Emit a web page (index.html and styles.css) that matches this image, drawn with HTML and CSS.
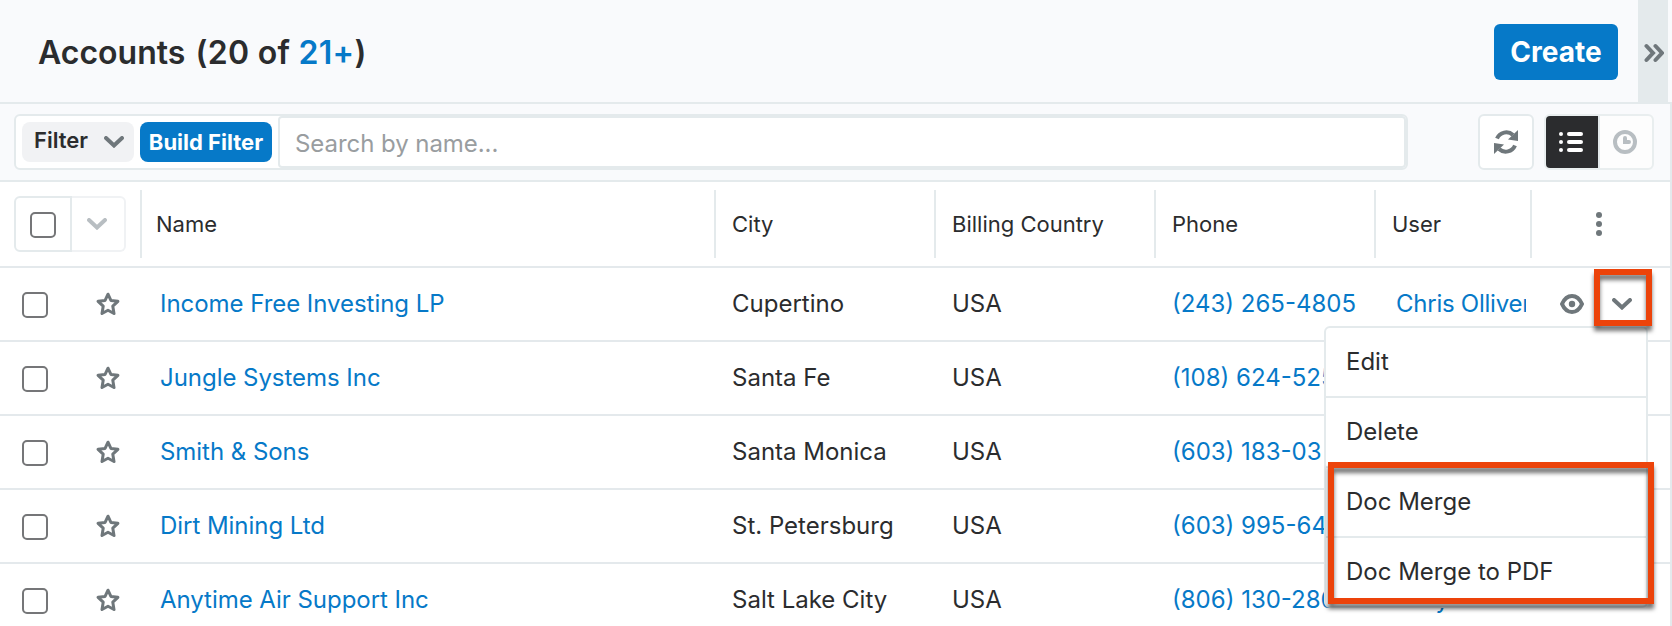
FILE: index.html
```
<!DOCTYPE html>
<html lang="en">
<head>
<meta charset="utf-8">
<title>Accounts</title>
<link rel="stylesheet" href="styles.css">
</head>
<body>
<svg class="defs" width="0" height="0" aria-hidden="true">
  <symbol id="star" viewBox="0 0 24 24"><path d="M12 2.200l2.900 6.200 7 .9-5.100 4.900 1.200 7.300L12 18.300l-6 3.200 1.200-7.300L2.100 9.300l7-.9z" fill="none" stroke="currentColor" stroke-width="3" stroke-linejoin="round"/></symbol>
  <symbol id="chev" viewBox="0 0 20 12"><path d="M2 2l8 7.500L18 2" fill="none" stroke="currentColor" stroke-width="4" stroke-linecap="round" stroke-linejoin="miter"/></symbol>
</svg>
<div class="app">
  <header class="top">
    <h1 class="title">Accounts <span class="count">(20 of <a class="link">21+</a>)</span></h1>
    <button class="create">Create</button>
    <div class="expand"><svg width="20" height="20" viewBox="0 0 20 20"><path d="M2.500 3l6.500 7-6.500 7M11.500 3l6.500 7-6.500 7" fill="none" stroke="#6f777b" stroke-width="4" stroke-linecap="round"/></svg></div>
  </header>
  <div class="toolbar">
    <div class="searchbox">
      <button class="filter">Filter <svg width="20" height="12"><use href="#chev"/></svg></button>
      <button class="build">Build Filter</button>
      <div class="search">Search by name...</div>
    </div>
    <button class="refresh"><svg width="24" height="24" viewBox="0 0 24 24"><path d="M3 8.500A10 10 0 0 1 19 5" fill="none" stroke="#6f777b" stroke-width="4"/><path d="M24 0v11l-10-1.500z" fill="#6f777b"/><path d="M21 15.500A10 10 0 0 1 5 19" fill="none" stroke="#6f777b" stroke-width="4"/><path d="M0 24V13l10 1.500z" fill="#6f777b"/></svg></button>
    <div class="toggle">
      <div class="mode on"><svg width="24" height="20" viewBox="0 0 24 20" fill="#fff"><circle cx="2" cy="2" r="2"/><circle cx="2" cy="10" r="2"/><circle cx="2" cy="18" r="2"/><rect x="8" width="16" height="4" rx="2"/><rect x="8" y="8" width="16" height="4" rx="2"/><rect x="8" y="16" width="16" height="4" rx="2"/></svg></div>
      <div class="mode"><svg width="24" height="24" viewBox="0 0 24 24"><circle cx="12" cy="12" r="10" fill="none" stroke="#b8bec2" stroke-width="4"/><path d="M10 8a2 2 0 0 1 4 0v2h2a2 2 0 0 1 0 4h-6z" fill="#b8bec2"/></svg></div>
    </div>
  </div>
  <div class="row head">
    <div class="select"><div class="pick"><i class="check"></i></div><div class="drop"><svg width="20" height="12"><use href="#chev"/></svg></div></div>
    <div class="cell name">Name</div><div class="cell">City</div><div class="cell">Billing Country</div><div class="cell">Phone</div><div class="cell">User</div>
    <div class="cell kebab"><svg width="6" height="24" viewBox="0 0 6 24" fill="#6f777b"><circle cx="3" cy="3" r="3"/><circle cx="3" cy="12" r="3"/><circle cx="3" cy="21" r="3"/></svg></div>
  </div>
  <div class="row">
    <div class="marks"><i class="check"></i><svg width="24" height="24"><use href="#star"/></svg></div>
    <div class="cell link">Income Free Investing LP</div><div class="cell">Cupertino</div><div class="cell">USA</div><div class="cell link phone">(243) 265-4805</div><div class="cell link user"><span>Chris Olliver</span></div>
    <div class="actions"><svg width="24" height="20" viewBox="0 0 24 20"><path d="M2 10c2.200-5 5.800-8 10-8s7.800 3 10 8c-2.200 5-5.800 8-10 8S4.200 15 2 10z" fill="none" stroke="currentColor" stroke-width="4" stroke-linejoin="round"/><circle cx="12" cy="10" r="3.200" fill="currentColor"/></svg>
      <div class="trigger"><svg width="20" height="12"><use href="#chev"/></svg><div class="mark mark-trigger"></div>
        <div class="menu"><div class="item">Edit</div><div class="item">Delete</div><div class="item">Doc Merge</div><div class="item">Doc Merge to PDF</div><div class="mark mark-items"></div></div>
      </div>
    </div>
  </div>
  <div class="row">
    <div class="marks"><i class="check"></i><svg width="24" height="24"><use href="#star"/></svg></div>
    <div class="cell link">Jungle Systems Inc</div><div class="cell">Santa Fe</div><div class="cell">USA</div><div class="cell link phone">(108) 624-525</div>
  </div>
  <div class="row">
    <div class="marks"><i class="check"></i><svg width="24" height="24"><use href="#star"/></svg></div>
    <div class="cell link">Smith &amp; Sons</div><div class="cell">Santa Monica</div><div class="cell">USA</div><div class="cell link phone">(603) 183-03</div>
  </div>
  <div class="row">
    <div class="marks"><i class="check"></i><svg width="24" height="24"><use href="#star"/></svg></div>
    <div class="cell link">Dirt Mining Ltd</div><div class="cell">St. Petersburg</div><div class="cell">USA</div><div class="cell link phone">(603) 995-64</div>
  </div>
  <div class="row">
    <div class="marks"><i class="check"></i><svg width="24" height="24"><use href="#star"/></svg></div>
    <div class="cell link">Anytime Air Support Inc</div><div class="cell">Salt Lake City</div><div class="cell">USA</div><div class="cell link phone">(806) 130-280</div><div class="cell link user"><span>Sally</span></div>
  </div>
</div>
</body>
</html>
```
FILE: styles.css
```
* { box-sizing: border-box; }
body { margin: 0; background: #fff; color: #2b2c2e; font: 24px/30px Inter, "Liberation Sans", sans-serif; }
button { font: inherit; border: 0; padding: 0; }
svg { display: block; flex: none; }
.defs { position: absolute; }
.app { width: 1672px; height: 626px; overflow: hidden; }
.link { color: #0679c8; }

.top { display: flex; align-items: center; height: 104px; padding: 0 4px 0 38px; background: #f9fafc; border-bottom: 2px solid #e4eaec; }
.title { flex: 1; margin: 0; padding-top: 4px; font-size: 32px; line-height: 40px; font-weight: 600; }
.count { margin-left: 2px; letter-spacing: 0.3px; }
.create { width: 124px; height: 56px; margin: 2px 20px 0 0; border-radius: 6px; background: #0679c8; color: #fff; font-size: 28px; font-weight: 700; }
.expand { display: flex; align-items: center; justify-content: center; width: 30px; height: 102px; padding: 4px 0 0 2px; background: #e4eaec; }

.toolbar { display: flex; height: 78px; padding: 10px 16px 10px 14px; background: #f9fafc; border-bottom: 2px solid #e4eaec; border-right: 2px solid #e4eaec; }
.searchbox { display: flex; width: 1394px; height: 56px; padding: 0; border: 2px solid #e4eaec; border-radius: 6px; background: #fff; }
.filter { display: flex; align-items: center; justify-content: space-between; width: 112px; height: 40px; margin: 6px 6px 0; padding: 0 10px 4px 12px; border-radius: 8px; background: #f1f2f4; color: #2b2c2e; font-size: 22px; font-weight: 600; }
.filter svg { color: #6f777b; margin-top: 4px; }
.build { width: 132px; height: 40px; margin: 6px 6px 0 0; border-radius: 8px; background: #0679c8; color: #fff; font-size: 22px; font-weight: 700; letter-spacing: 0; white-space: nowrap; }
.search { flex: 1; height: 52px; padding: 11px 15px; border: 2px solid #e4eaec; border-radius: 4px; color: #999da0; line-height: 30px; letter-spacing: -0.06px; }
.refresh { display: flex; align-items: center; justify-content: center; width: 56px; height: 56px; margin-left: 70px; border: 2px solid #e4eaec; border-radius: 6px; background: #fff; }
.toggle { display: flex; width: 110px; height: 56px; margin-left: 10px; border: 2px solid #e9eeef; border-radius: 6px; overflow: hidden; background: #fdfdfd; }
.mode { display: flex; flex: 1; align-items: center; justify-content: center; padding-right: 2px; }
.mode.on { flex: none; width: 54px; background: #2b2c2e; border-right: 2px solid #e4eaec; }

.row { display: grid; grid-template-columns: 140px 574px 220px 220px 220px 156px 1fr; height: 74px; border-bottom: 2px solid #e4e9ec; border-right: 2px solid #e4e9ec; }
.cell { padding: 21px 0 0 18px; white-space: nowrap; }
.cell.link { padding-left: 20px; letter-spacing: -0.04px; }
.cell.phone { padding-left: 18px; letter-spacing: 0; }
.cell.user { padding-left: 22px; letter-spacing: -0.25px; }
.check { display: block; width: 26px; height: 26px; border: 2px solid #757678; border-radius: 5px; background: #fff; }
.marks { display: flex; align-items: center; gap: 48px; padding: 2px 0 0 22px; color: #6f777b; }
.marks svg { margin-top: -2px; }
.user span { display: block; width: 130px; overflow: hidden; }

.head { height: 86px; font-size: 22px; }
.head .cell { height: 68px; margin-top: 8px; padding: 19px 0 0 16px; border-left: 2px solid #e4eaec; }
.head .name { padding-left: 14px; }
.select { display: flex; width: 112px; height: 56px; margin: 14px 0 0 14px; }
.pick, .drop { display: flex; align-items: center; justify-content: center; border: 2px solid #e4eaec; }
.pick { width: 58px; padding-top: 2px; border-radius: 6px 0 0 6px; }
.drop { width: 54px; padding-right: 2px; border-left: 0; border-color: #f0f2f4; border-radius: 0 6px 6px 0; color: #b8bec2; }
.head .kebab { display: flex; justify-content: center; padding: 22px 4px 0 0; }

.actions { display: flex; align-items: center; padding-left: 30px; color: #6f777b; }
.trigger { position: relative; margin-left: 28px; }
.menu { position: absolute; z-index: 1; top: 28px; left: -288px; width: 324px; height: 282px; border: 2px solid #e4eaec; border-radius: 6px; background: #fff; color: #2b2c2e; }
.item { height: 70px; padding: 19px 20px 0; border-bottom: 2px solid #e4eaec; }
.item:nth-child(4) { border-bottom: 0; }
.mark { position: absolute; z-index: 2; border: 6px solid #ec430a; filter: drop-shadow(0 5px 2px rgba(0,0,0,.55)); }
.mark-trigger { top: -29px; left: -18px; width: 58px; height: 57px; }
.mark-items { top: 134px; left: 2px; width: 326px; height: 142px; }
```
